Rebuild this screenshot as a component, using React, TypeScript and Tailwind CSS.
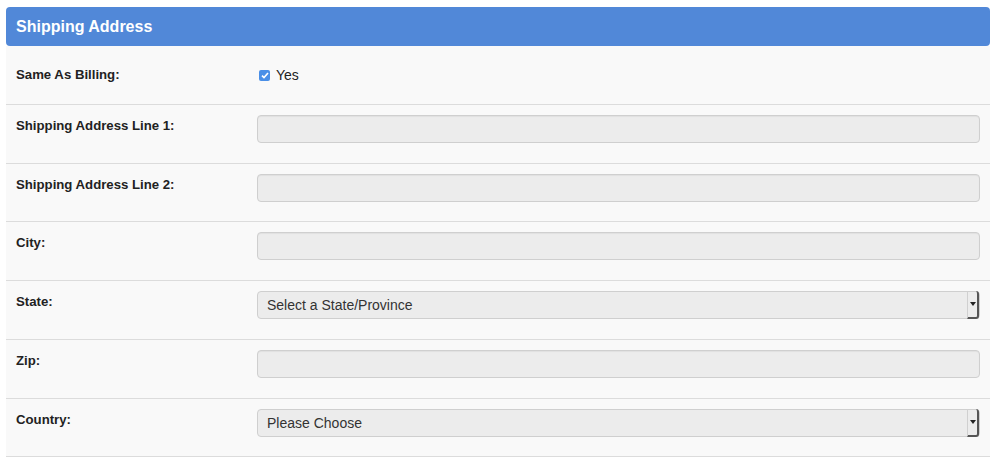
import React from "react";

const Label = ({ children }: { children: React.ReactNode }) => (
  <div className="w-[251px] shrink-0 pl-[10px] pt-[1px] text-[13.2px] font-bold leading-[20px] text-[#222]">{children}</div>
);

const Row = ({ label, children, h }: { label: string; children: React.ReactNode; h: string }) => (
  <div className={`flex border-b border-[#dcdcdc] bg-[#f9f9f9] pt-[10px] ${h}`}>
    <Label>{label}</Label>
    <div className="flex-1 pr-[10px]">{children}</div>
  </div>
);

const Input = () => (
  <div className="h-[28px] rounded-[4px] border border-[#cfcfcf] bg-[#ececec] shadow-[inset_0_1px_1px_rgba(0,0,0,0.05)]" />
);

const Select = ({ text }: { text: string }) => (
  <div className="flex h-[28px] items-center rounded-[4px] border border-[#cfcfcf] bg-[#ececec]">
    <span className="flex-1 pl-[9px] text-[14px] text-[#333]">{text}</span>
    <div className="flex h-[28px] w-[12px] items-center justify-center rounded-r-[3px] border-r-2 border-b-2 border-[#555] border-l border-l-[#d0d0d0]">
      <svg width="6" height="4" viewBox="0 0 6 4"><path d="M0 0h6L3 4z" fill="#222" /></svg>
    </div>
  </div>
);

export default function App() {
  return (
    <div className="h-[463px] w-[1000px] bg-white pl-[6px] pr-[10px] pt-[7px]" style={{ fontFamily: '"Liberation Sans", Arial, sans-serif' }}>
      <div className="flex h-[39px] items-center rounded-[4px] bg-[#5188d8] pl-[10px] text-[16px] font-bold text-white">
        Shipping Address
      </div>
      <div className="flex h-[59px] border-b border-[#dcdcdc] bg-[#f9f9f9] pt-[18px]">
        <Label>Same As Billing:</Label>
        <div className="flex items-center gap-[6px] pl-[2px] h-[22px]">
          <div className="flex h-[11px] w-[11px] items-center justify-center rounded-[2px] bg-[#4a8fe7]">
            <svg width="8" height="7" viewBox="0 0 8 7"><path d="M1 3.6 3 5.6 7 1" stroke="white" strokeWidth="1.6" fill="none" /></svg>
          </div>
          <span className="text-[14px] text-[#222]">Yes</span>
        </div>
      </div>
      <Row h="h-[59px]" label="Shipping Address Line 1:"><Input /></Row>
      <Row h="h-[58px]" label="Shipping Address Line 2:"><Input /></Row>
      <Row h="h-[59px]" label="City:"><Input /></Row>
      <Row h="h-[59px]" label="State:"><Select text="Select a State/Province" /></Row>
      <Row h="h-[59px]" label="Zip:"><Input /></Row>
      <Row h="h-[58px]" label="Country:"><Select text="Please Choose" /></Row>
    </div>
  );
}
